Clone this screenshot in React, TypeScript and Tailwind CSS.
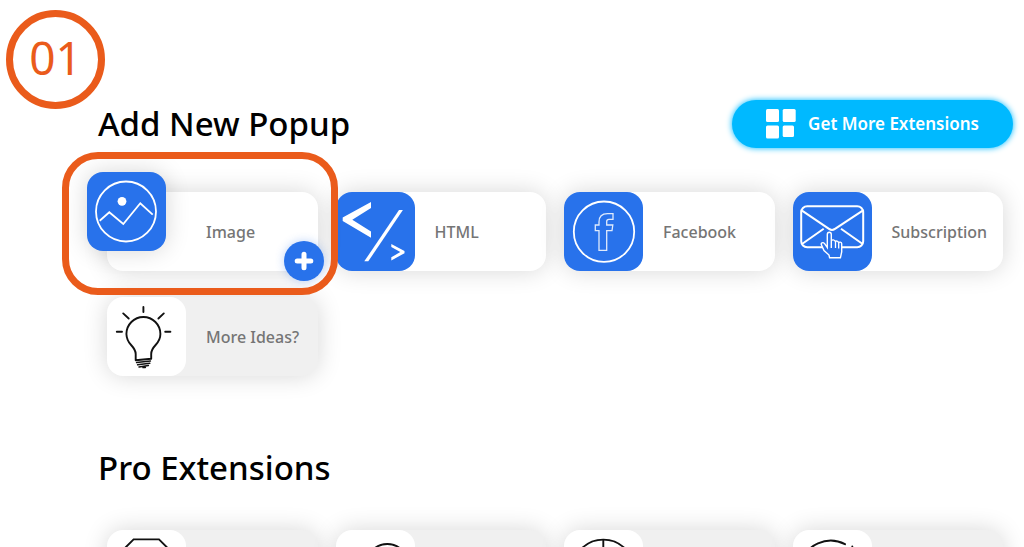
import React from 'react';

interface CardProps {
  label?: string;
  icon: React.ReactNode;
  muted?: boolean;
}

const ImageIcon = () => (
  <svg viewBox="0 0 79 79" className="size-full" fill="none" stroke="#fff" strokeWidth="1.8">
    <circle cx="39" cy="39.5" r="30" />
    <circle cx="35" cy="29.3" r="4.4" fill="#fff" stroke="none" />
    <path d="M12.7 48.7 22.3 40.3 36.3 52 53.3 31.3 65.7 42.7" />
  </svg>
);

const HtmlIcon = () => (
  <svg viewBox="0 0 79 79" className="size-full" fill="#fff">
    <path d="M35 10 6.7 25.6V29L35 45.7V39.5L16.3 27.7 35 16z" />
    <path d="M63 18h3.9L32.3 69.3h-4z" />
    <path d="M55.3 52 68.5 59v2.2L55.3 68.4v-3.1L64.3 60.1 55.3 55z" />
  </svg>
);

const FacebookIcon = () => (
  <svg viewBox="0 0 79 79" className="size-full" fill="none" stroke="#fff">
    <circle cx="40" cy="39.7" r="30.2" strokeWidth="1.8" />
    <path
      d="M49 21.6h-5.5C38 21.6 35 24.8 35 30v3h-3.7v5.7H35v19.6h7.7V38.7H48l.8-5.7h-6.1v-3.5c0-1.5.7-2.2 2.2-2.2H49z"
      strokeWidth="1.3"
      strokeOpacity=".85"
    />
  </svg>
);

const SubscriptionIcon = () => (
  <svg viewBox="0 0 79 79" className="size-full" fill="none" stroke="#fff" strokeWidth="2">
    <rect x="8.2" y="14.2" width="62" height="41" rx="6" />
    <path d="M9 18.7 36 36.9q3 2 6 0L69.7 18.7M9 52 30.7 36.7M69.7 52 48 36.7" />
    <path
      d="M38.3 56V42.6c0-3.2-4-3.2-4 0V55.5L31.6 51.6c-1.8-2-4.2-.6-3 1.6L31 58.5l5 4.5.6 2.8h10.8L48.7 60v-8.2c0-1.8-2.8-2.4-3-.6-.2-2.4-3-2.9-3.2-1.2-.2-2.4-4-3-4.2-.8"
      fill="#2872eb"
      strokeWidth="1.4"
    />
    <path d="M42.5 49.5V56M45.7 51V56.5" strokeWidth="1.3" />
  </svg>
);

const BulbIcon = () => (
  <svg viewBox="0 0 79 79" className="size-full" fill="none" stroke="#111" strokeWidth="1.9" strokeLinecap="round" strokeLinejoin="round">
    <path d="M28.7 63.2V57c0-3.6-2-6.2-4.6-9A17 17 0 0 1 19.4 37a17 17 0 0 1 34 0c0 4.4-2 8-4.8 11-2.6 2.8-4.4 5.4-4.4 9v4.8z" />
    <path d="M29.6 65.6 43.4 64.1M30.6 67.8 42.8 66.3M32 69.9 41.4 68.6M36 70.6l2.4-.2" strokeWidth="1.5" />
    <path d="M36.4 9.9V15M16.2 16.4 21.7 21.5M56.8 16.4 51.4 21.5M9.8 34.7H15M58.2 34.7h5.2" />
  </svg>
);

const OctagonIcon = () => (
  <svg viewBox="0 0 79 79" className="size-full" fill="none" stroke="#111" strokeWidth="1.9">
    <path d="M26.6 9.4h25.4L70.2 27.5v25.4L52 71.1H26.6L8.4 52.9V27.5z" />
  </svg>
);

const LockIcon = () => (
  <svg viewBox="0 0 79 79" className="size-full" fill="none" stroke="#111" strokeWidth="1.9">
    <circle cx="51.3" cy="35" r="21" />
  </svg>
);

const TargetIcon = () => (
  <svg viewBox="0 0 79 79" className="size-full" fill="none" stroke="#111" strokeWidth="1.9">
    <circle cx="39.3" cy="40.6" r="31" />
    <path d="M39.3 9.4V28" />
  </svg>
);

const ClockIcon = () => (
  <svg viewBox="0 0 79 79" className="size-full" fill="none" stroke="#111" strokeWidth="1.9" strokeLinecap="round">
    <path d="M52 14.2A31 31 0 1 0 68 35M59.3 16.4v.6" />
  </svg>
);

const GridIcon = () => (
  <svg viewBox="0 0 30 30" className="size-[30px]" fill="#fff">
    <rect x="0" y="0" width="13" height="13" rx="1.5" />
    <rect x="16.7" y="0" width="13" height="13" rx="1.5" />
    <rect x="0" y="16.5" width="13" height="13" rx="1.5" />
    <rect x="16.7" y="16.5" width="11.3" height="11.5" rx="1.5" />
  </svg>
);

const CARD = 'flex h-[79px] items-center gap-5 rounded-2xl shadow-[0_0_24px_rgba(0,0,0,0.16)]';
const TILE = 'size-[79px] shrink-0 rounded-2xl';

function ExtensionCard({ label, icon, muted }: CardProps) {
  const tone = muted ? 'bg-[#f0f0f0]' : 'bg-white';
  const tileTone = muted ? 'bg-white' : 'bg-[#2872eb]';

  if (!label) {
    return (
      <div className={`${CARD} ${tone}`}>
        <div className={`${TILE} ${tileTone}`}>{icon}</div>
      </div>
    );
  }

  return (
    <a href="#" className={`${CARD} ${tone}`}>
      <span className={`${TILE} ${tileTone}`}>{icon}</span>
      <span className="whitespace-nowrap">{label}</span>
    </a>
  );
}

// The card in its hover state: tile lifted up-left, add badge in the corner
function ActiveCard() {
  return (
    <div className="relative z-10">
      <a href="#" className={`${CARD} bg-white`}>
        <span className={`${TILE} relative -top-5 -left-5 bg-[#2872eb] shadow-[0_0_24px_rgba(0,0,0,0.16)]`}>
          <ImageIcon />
        </span>
        <span>Image</span>
      </a>
      <button
        type="button"
        aria-label="Add"
        className="absolute -right-1.5 -bottom-2.5 flex size-10 items-center justify-center rounded-full bg-[#2872eb] shadow-[0_0_10px_rgba(40,114,235,0.3)]"
      >
        <svg viewBox="0 0 20 20" className="size-5" stroke="#fff" strokeWidth="5" strokeLinecap="round">
          <path d="M10 3.2v13.6M3.2 10h13.6" />
        </svg>
      </button>
      <div className="pointer-events-none absolute -top-10 -right-5 -bottom-6 -left-[45px] rounded-[36px] border-[7px] border-[#ea5b1b]" />
    </div>
  );
}

export default function App() {
  return (
    <main className="relative h-screen overflow-hidden bg-white pt-[100px] font-['Noto_Sans','Open_Sans',sans-serif] text-black">
      {/* Step marker */}
      <div className="absolute top-2.5 left-1.5 flex size-[99px] items-center justify-center rounded-full border-[7px] border-[#ea5b1b] pb-1.5 text-[46px] leading-none text-[#ea5b1b]">
        01
      </div>

      <header className="flex items-center justify-between pr-[11px] pl-[98px]">
        <h1 className="text-[33px] leading-[48px] font-medium">Add New Popup</h1>
        <button
          type="button"
          className="flex h-12 items-center gap-3 rounded-full bg-[#00b9ff] px-[34px] text-[17px] font-semibold whitespace-nowrap text-white shadow-[0_0_6px_#00b9ff]"
        >
          <GridIcon />
          Get More Extensions
        </button>
      </header>

      <section className="mt-11 grid grid-cols-4 gap-x-[18px] gap-y-[26px] pr-[21px] pl-[107px] text-base font-medium text-[#757575]">
        <ActiveCard />
        <ExtensionCard label="HTML" icon={<HtmlIcon />} />
        <ExtensionCard label="Facebook" icon={<FacebookIcon />} />
        <ExtensionCard label="Subscription" icon={<SubscriptionIcon />} />
        <ExtensionCard label="More Ideas?" icon={<BulbIcon />} muted />
      </section>

      <h2 className="mt-[68px] pl-[98px] text-[33px] leading-[48px] font-medium">Pro Extensions</h2>

      <section className="mt-[38px] grid grid-cols-4 gap-x-[18px] gap-y-[26px] pr-[21px] pl-[107px]">
        <ExtensionCard icon={<OctagonIcon />} muted />
        <ExtensionCard icon={<LockIcon />} muted />
        <ExtensionCard icon={<TargetIcon />} muted />
        <ExtensionCard icon={<ClockIcon />} muted />
      </section>
    </main>
  );
}
